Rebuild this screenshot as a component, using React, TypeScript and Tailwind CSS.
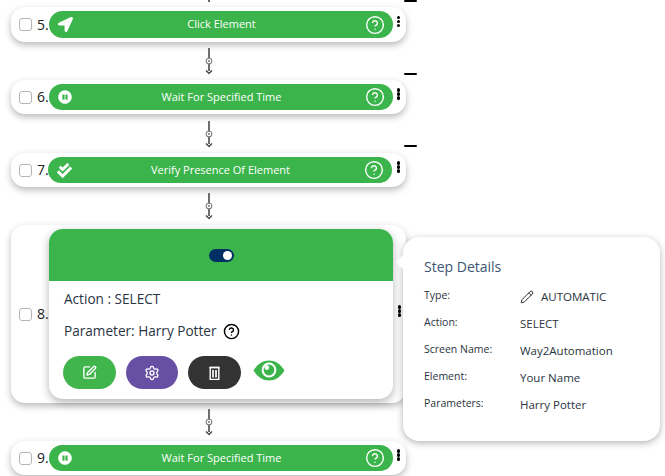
import { CircleHelp, Pencil, Settings, SquarePen } from "lucide-react";
import { FaCheckDouble, FaLocationArrow, FaPauseCircle } from "react-icons/fa";

const font = { fontFamily: '"Open Sans", sans-serif' };

function Kebab() {
  return (
    <div className="flex w-[13px] flex-col items-center gap-[0.5px] pb-[6px]">
      <span className="h-[3.5px] w-[3.5px] rounded-full bg-black" />
      <span className="h-[3.5px] w-[3.5px] rounded-full bg-black" />
      <span className="h-[3.5px] w-[3.5px] rounded-full bg-black" />
    </div>
  );
}

function RowLead({ n, narrow }: { n: number; narrow?: boolean }) {
  return (
    <div className={`flex items-center pl-[8px] ${narrow ? "w-[37px]" : "w-[38px]"}`}>
      <span className="h-[13px] w-[13px] shrink-0 rounded-[3px] border border-[#b5b5b5] bg-white" />
      <span className="ml-[5px] text-[14px] leading-none text-[#222]">{n}.</span>
    </div>
  );
}

function Step({ n, title, icon, tall, narrow }: { n: number; title: string; icon: React.ReactNode; tall?: boolean; narrow?: boolean }) {
  return (
    <div className={`ml-[11px] flex w-[395px] items-center rounded-[14px] bg-white shadow-[0_3px_7px_rgba(0,0,0,0.28)] ${tall ? "h-[35px]" : "h-[34px]"}`}>
      <RowLead n={n} narrow={narrow} />
      <div className={`flex w-[344px] items-center rounded-[14px] bg-[#3bb54b] pl-[7px] pr-[8px] text-white ${tall ? "h-[27px]" : "h-[26px]"}`}>
        <div className="flex w-[18px] justify-center">{icon}</div>
        <span className="flex-1 pl-[4px] text-center text-[11px]">{title}</span>
        <CircleHelp size={20} strokeWidth={1.7} />
      </div>
      <div className={narrow ? "ml-[0px]" : "ml-[-1px]"}>
        <Kebab />
      </div>
    </div>
  );
}

function Connector({ tall }: { tall?: boolean }) {
  return (
    <div className={`ml-[200px] flex w-[18px] items-center justify-center ${tall ? "h-[39px]" : "h-[38px]"}`}>
      <svg width="18" height="28" viewBox="0 0 18 28" fill="none">
        <path d="M9 1V24" stroke="#6e6e6e" strokeWidth="2" />
        <circle cx="9" cy="14" r="2.8" fill="#fff" stroke="#808080" strokeWidth="1.1" />
        <circle cx="9" cy="14" r="1" fill="#777" />
        <path d="M6 23.5L9 26.5L12 23.5" stroke="#333" strokeWidth="1.2" />
      </svg>
    </div>
  );
}

function TrashIcon() {
  return (
    <svg width="11" height="14" viewBox="0 0 11 14" fill="none" stroke="#fff">
      <path d="M0.5 1.5H10.5" strokeWidth="1.4" />
      <rect x="1.2" y="1.5" width="8.6" height="12" strokeWidth="1.4" />
      <path d="M4 4V11.5M7 4V11.5" strokeWidth="1.7" />
    </svg>
  );
}

function EyeIcon() {
  return (
    <svg width="32" height="21" viewBox="0 0 32 21">
      <path d="M0.5 10.5C5 3.5 10 .5 16 .5S27 3.5 31.5 10.5C27 17.5 22 20.5 16 20.5S5 17.5 0.5 10.5Z" fill="#3bb54b" />
      <circle cx="16" cy="10" r="7.4" fill="#fff" />
      <circle cx="16" cy="10" r="5.4" fill="#3bb54b" />
      <circle cx="13.8" cy="7.6" r="2.3" fill="#fff" />
    </svg>
  );
}

function DetailRow({ label, children }: { label: string; children: React.ReactNode }) {
  return (
    <div className="flex h-[27px] items-center">
      <span className="w-[96px] pb-[2px] text-[10.5px] text-[#2c3440]">{label}</span>
      <span className="flex items-center text-[11.5px] text-[#2c3440]">{children}</span>
    </div>
  );
}

export default function App() {
  return (
    <div className="relative h-[476px] w-[665px] overflow-hidden bg-white pt-[7px]" style={font}>
      <span className="absolute left-[208px] top-0 h-[2px] w-[2px] bg-[#666]" />
      <span className="absolute left-[404px] top-0 h-[2px] w-[13px] rounded-sm bg-black" />
      <span className="absolute left-[404px] top-[73px] h-[2px] w-[13px] rounded-sm bg-black" />
      <span className="absolute left-[404px] top-[145px] h-[2px] w-[13px] rounded-sm bg-black" />

      <Step n={5} title="Click Element" tall icon={<FaLocationArrow size={15} />} />
      <Connector />
      <Step n={6} title="Wait For Specified Time" icon={<FaPauseCircle size={14} />} />
      <Connector tall />
      <Step n={7} title="Verify Presence Of Element" narrow icon={<FaCheckDouble size={15} />} />
      <Connector />

      <div className="ml-[11px] flex h-[178px] w-[395px] items-center rounded-[14px] bg-white shadow-[0_3px_7px_rgba(0,0,0,0.28)]">
        <RowLead n={8} />
        <div className="h-[170px] w-[344px] overflow-hidden rounded-[14px] bg-white shadow-[0_3px_8px_rgba(0,0,0,0.3)]">
          <div className="flex h-[52px] items-center justify-center bg-[#3bb54b]">
            <div className="flex h-[13px] w-[25px] items-center justify-end rounded-full bg-[#002f63] pr-[2px]">
              <span className="h-[9px] w-[9px] rounded-full bg-white" />
            </div>
          </div>
          <div className="px-[14px] pt-[8px] text-[13.6px] text-[#2a3442]">
            <div className="ml-[1px] h-[20px] leading-[20px]">Action : SELECT</div>
            <div className="ml-[1px] mt-[12px] flex h-[20px] items-center leading-[20px]">
              Parameter: Harry Potter
              <CircleHelp size={17} strokeWidth={2} className="ml-[7px] text-black" />
            </div>
            <div className="mt-[15px] flex items-start">
              <div className="flex h-[33px] w-[53px] items-center justify-center rounded-full bg-[#3fb54c] text-white">
                <SquarePen size={15} strokeWidth={2.2} />
              </div>
              <div className="ml-[10px] flex h-[33px] w-[52px] items-center justify-center rounded-full bg-[#6750a4] text-white">
                <Settings size={16} strokeWidth={2} />
              </div>
              <div className="ml-[10px] flex h-[33px] w-[53px] items-center justify-center rounded-full bg-[#333333]">
                <TrashIcon />
              </div>
              <div className="ml-[12px] mt-[4px]">
                <EyeIcon />
              </div>
            </div>
          </div>
        </div>
        <Kebab />
      </div>

      <Connector />
      <Step n={9} title="Wait For Specified Time" icon={<FaPauseCircle size={14} />} />

      <div className="absolute left-[403px] top-[237px] h-[204px] w-[257px] rounded-[16px] bg-white pl-[21px] pt-[20px] shadow-[0_2px_7px_rgba(0,0,0,0.3)]">
        <span className="absolute left-[-5px] top-[20px] h-[10px] w-[10px] rotate-45 bg-white" />
        <div className="mb-[7px] h-[19px] text-[14px] leading-[19px] text-[#3d5573]">Step Details</div>
        <DetailRow label="Type:">
          <Pencil size={14} strokeWidth={1.6} className="mr-[7px] text-[#222]" />
          AUTOMATIC
        </DetailRow>
        <DetailRow label="Action:">SELECT</DetailRow>
        <DetailRow label="Screen Name:">Way2Automation</DetailRow>
        <DetailRow label="Element:">Your Name</DetailRow>
        <DetailRow label="Parameters:">Harry Potter</DetailRow>
      </div>
    </div>
  );
}
